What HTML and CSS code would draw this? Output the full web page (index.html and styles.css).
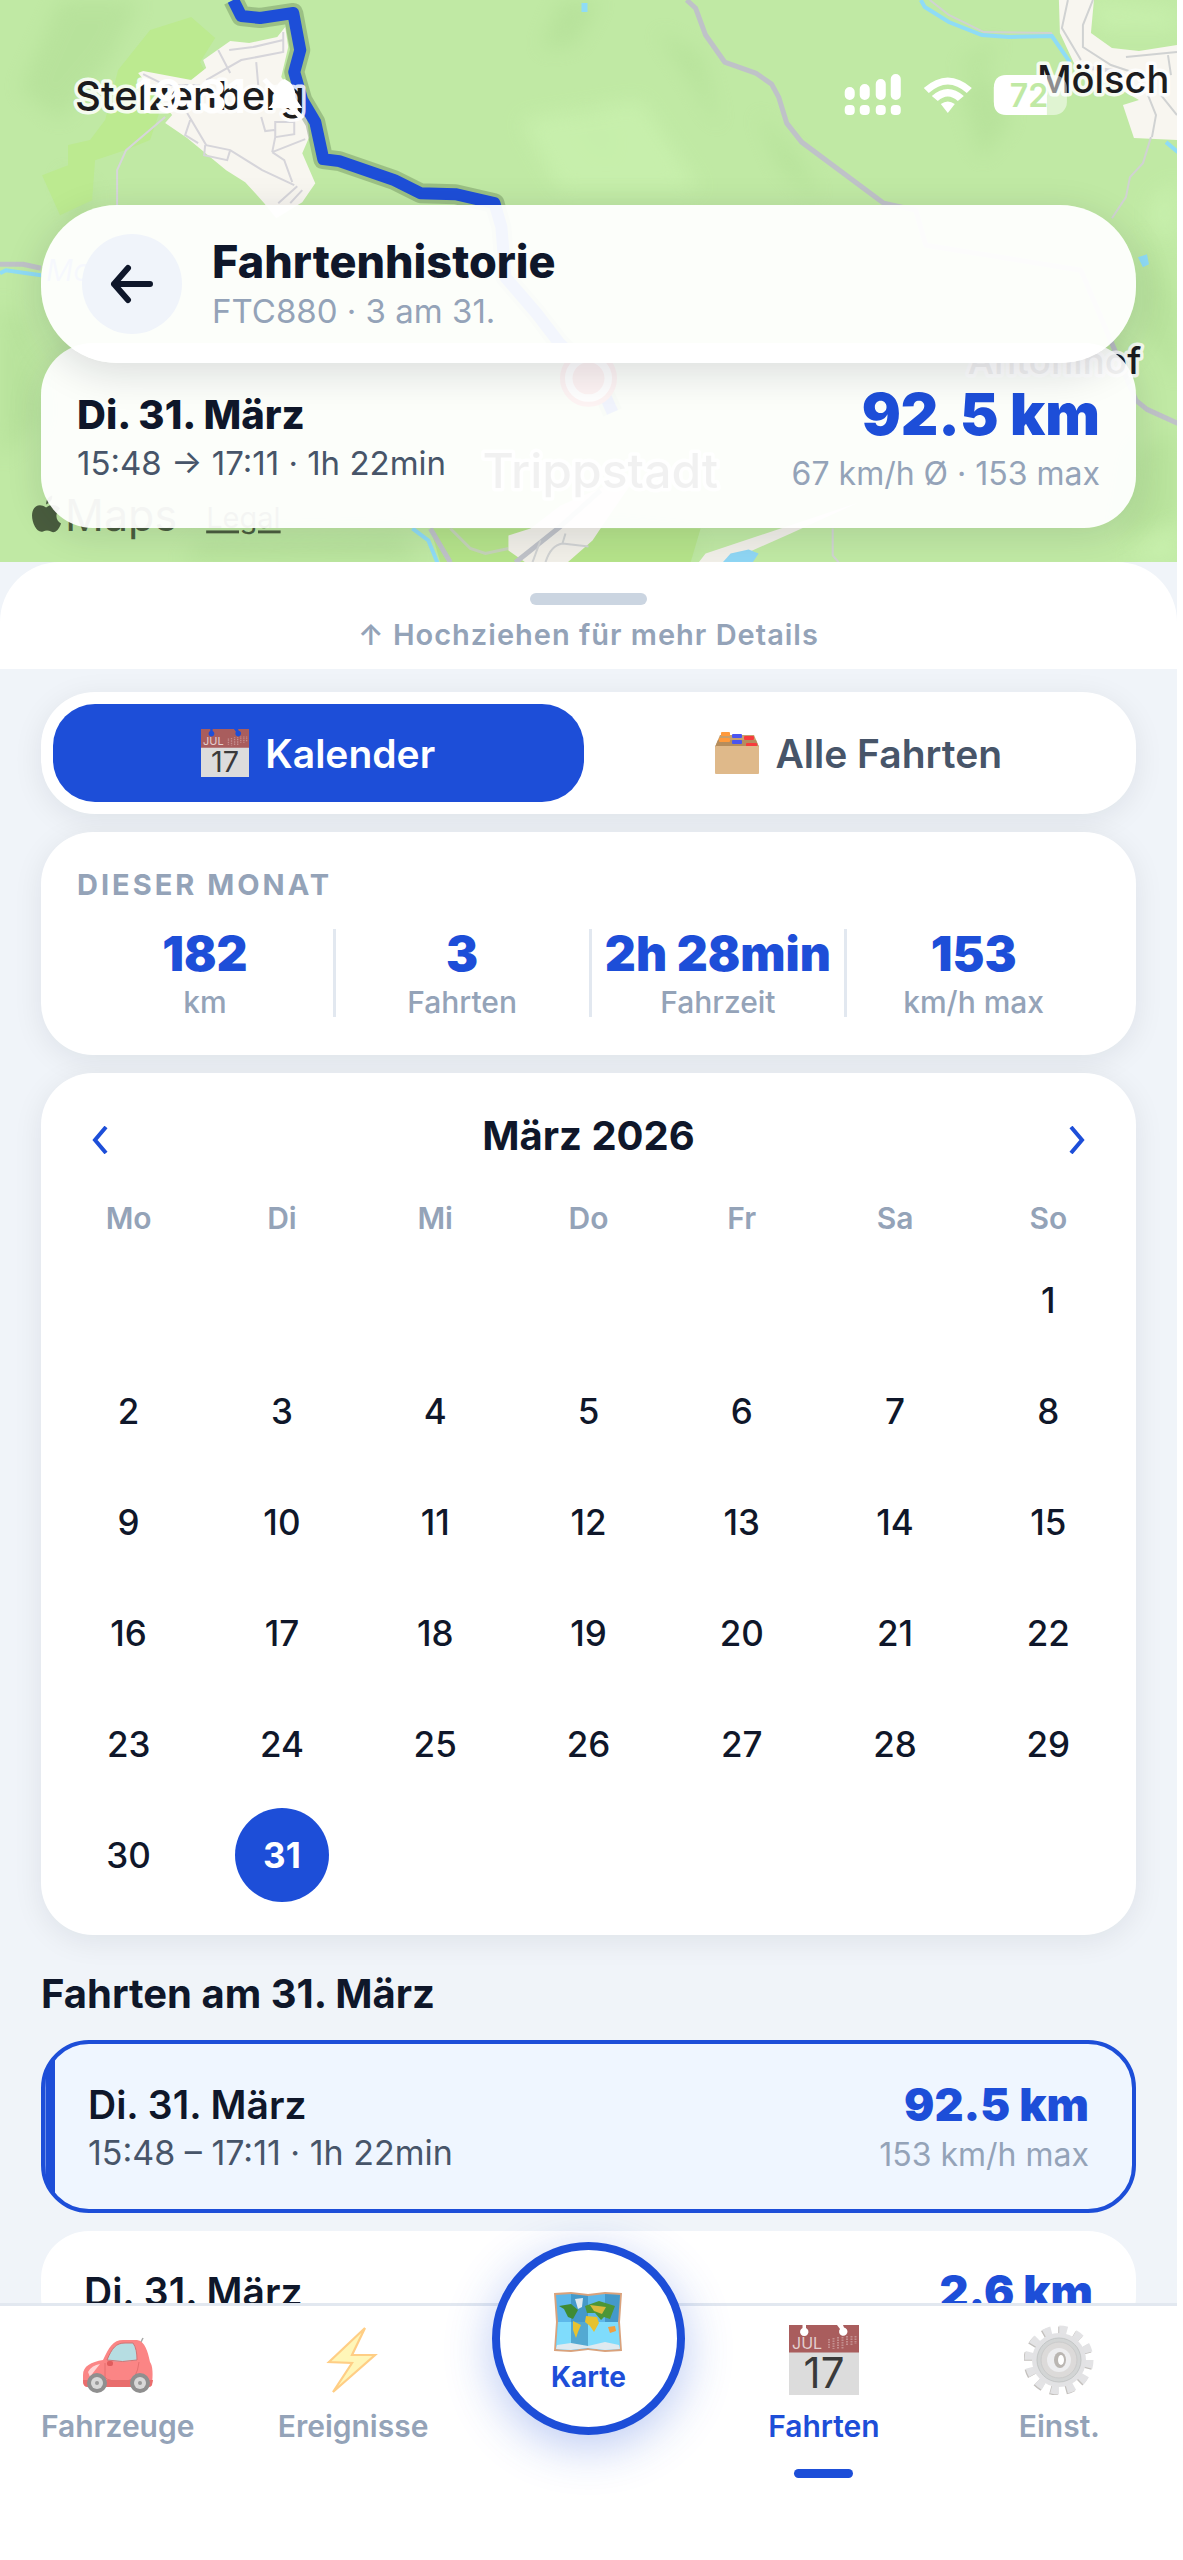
FILE: index.html
```html
<!DOCTYPE html>
<html lang="de">
<head>
<meta charset="utf-8">
<meta name="viewport" content="width=device-width, initial-scale=1">
<title>Fahrtenhistorie</title>
<link rel="stylesheet" href="styles.css">
</head>
<body>
<svg width="0" height="0" class="defs" aria-hidden="true">
  <defs>
    <symbol id="i-calendar" viewBox="0 0 70 70">
      <path fill="#dcdcdc" d="M0 26H70V70H0z"/>
      <path fill="#a95d5d" d="M0 0H13.500V3A4.200 4.200 0 1 0 17 3V0H48L51 4A4.200 4.200 0 1 0 55 2.500L54 0H70V27.500H0z"/>
      <text x="3" y="24" font-size="16" fill="#e3cfcf">JUL</text>
      <path stroke="#c48f8f" stroke-width="2" stroke-dasharray="1.500 1" d="M40 14V24M44.500 13V24M49 12V24M53.500 12V24M58 11V21M62.500 11V20M66.500 11V19"/>
      <text x="35" y="63" font-size="42" text-anchor="middle" fill="#3a3a3a">17</text>
    </symbol>
    <symbol id="i-box" viewBox="0 0 44 42">
      <path fill="#c79f6c" d="M5 3H39L44 15H0z"/>
      <path fill="#b58d5d" d="M3 8H41L44 15H0z"/>
      <rect x="6" y="0" width="9" height="4" rx="1" fill="#ff9a3c"/>
      <rect x="17" y="2" width="10" height="4" rx="1" fill="#4a55f0"/>
      <rect x="29" y="4" width="10" height="4" rx="1" fill="#f73c3c"/>
      <rect x="4" y="6" width="11" height="4" rx="1" fill="#ff9a3c"/>
      <rect x="17" y="8" width="10" height="4" rx="1" fill="#4a55f0"/>
      <rect x="31" y="11" width="11" height="4" rx="1" fill="#f73c3c"/>
      <rect y="14" width="44" height="28" rx="1" fill="#dfb98a"/>
    </symbol>
    <symbol id="i-car" viewBox="0 0 70 70">
      <path fill="none" stroke="#a9a9a9" stroke-width="1.500" d="M57 19L60 13"/>
      <path fill="#fb8585" d="M20 35C26 22 30 15 40 15H54C62 16 65 27 67 37C70 41 70 50 69 59Q69 62 65 62H5Q0 62 0 57V50C0 41 8 37 20 35z"/>
      <path fill="#e96d6d" d="M0 55H70L69 60Q68 62 65 62H5Q0 62 0 55z"/>
      <path fill="#b6dde2" stroke="#cf7474" stroke-width="1" d="M24 35C29 23 33 18 42 18H50C53 22 54 28 54 35Q40 38 24 35z"/>
      <path fill="none" stroke="#e56f6f" stroke-width="1" d="M22 38V52Q24 57 44 56Q54 55 56 37"/>
      <path fill="#ffd4d4" d="M5 47Q9 40 17 39Q12 45 7 52z"/>
      <rect x="24" y="36" width="6" height="5" rx="2" fill="#e05c5c"/>
      <circle cx="14" cy="58" r="10" fill="#8f8f8f"/><circle cx="14" cy="58" r="6" fill="#d8d8d8"/><circle cx="14" cy="58" r="2" fill="#999"/>
      <circle cx="57" cy="58" r="10" fill="#8f8f8f"/><circle cx="57" cy="58" r="6" fill="#d8d8d8"/><circle cx="57" cy="58" r="2" fill="#999"/>
    </symbol>
    <symbol id="i-bolt" viewBox="0 0 70 70">
      <path fill="#fff6b8" stroke="#ffce85" stroke-width="2.200" stroke-linejoin="miter" d="M47 3L11 37L34 38L15 67L57 30L34 30z"/>
    </symbol>
    <symbol id="i-map" viewBox="0 0 68 60">
      <path fill="#d9a27c" d="M0 1L17 0L34 2L51 0L68 1L66 30L68 59L51 60L34 58L17 60L0 59L2 30z"/>
      <path fill="#5db8ea" d="M2 3L17 2L34 4L51 2L66 3L64 30L66 57L51 58L34 56L17 58L2 57L4 30z"/>
      <path fill="#7fdcfc" d="M4 30H64L66 56L51 58L34 56L17 58L2 57z"/>
      <path fill="#2f7fae" opacity=".55" d="M17 2L34 4V56L17 58zM51 2L66 3L64 30H51z"/>
      <path fill="#dfeaf0" d="M21 7L29 6L28 15L24 17zM3 53L17 51L34 54L51 50L65 53L66 57L51 58L34 56L17 58L2 57z"/>
      <path fill="#3f8b32" d="M5 14L17 12L24 18L19 27L14 25L10 17z"/>
      <path fill="#e7c22f" d="M19 29L27 33L24 40L22 46L19 38zM32 24L43 25L45 31L40 40L36 34L31 30z"/>
      <path fill="#4c9637" d="M31 14L45 9L61 14L56 27L50 25L47 28L41 21L33 21z"/>
      <path fill="#d9b93c" d="M36 13L52 15L48 22L40 19z"/>
      <path fill="#f0a040" d="M54 35L61 34L62 39L56 41z"/>
    </symbol>
    <symbol id="i-gear" viewBox="0 0 70 70">
      <circle cx="34" cy="36" r="30" fill="none" stroke="#c3c0bd" stroke-width="9" stroke-dasharray="7.800 7.908"/>
      <circle cx="35" cy="35" r="30" fill="none" stroke="#e3e3e5" stroke-width="9" stroke-dasharray="7.800 7.908"/>
      <circle cx="35" cy="35" r="27" fill="#e2e2e4"/>
      <circle cx="35" cy="35" r="22" fill="#d3d5d5" stroke="#c3c6c6" stroke-width="1"/>
      <circle cx="35" cy="35" r="18" fill="#dcdad9" stroke="#cbcbcb" stroke-width="1"/>
      <circle cx="35" cy="35" r="12" fill="#ededef"/>
      <ellipse cx="36" cy="35" rx="6" ry="8" fill="#bab6b2"/>
      <ellipse cx="37" cy="35" rx="3" ry="5" fill="#fff"/>
    </symbol>
  </defs>
</svg>

<div class="app">
  <header class="top">
    <svg class="map" viewBox="0 0 1176 562" preserveAspectRatio="xMidYMin slice" role="img" aria-label="Karte der Fahrt">
      <defs><filter id="soft" x="-20%" y="-20%" width="140%" height="140%"><feGaussianBlur stdDeviation="10"/></filter></defs>
      <rect width="1176" height="562" fill="#c0e9a4"/>
      <g filter="url(#soft)" fill="#aeda92" opacity=".45">
        <path d="M60 0H140L110 60L60 120L20 90zM0 300L30 330L40 420L0 460z"/>
        <path d="M560 0H600L575 45L540 50zM580 110L610 135L608 160L583 130zM655 30L700 55L720 130L690 80zM755 110L800 160L820 200L780 170zM963 60L1000 40L985 65L960 75zM985 70L1010 120L980 160L960 90z"/>
        <path d="M60 170L95 190L80 240L70 210zM1140 230L1176 300V380L1140 330zM1135 450L1176 430V520L1120 540zM600 530L700 540L690 562H610zM200 540L400 535L420 562H180z"/>
      </g>
      <g filter="url(#soft)" fill="#c9f1ae" opacity=".8">
        <path d="M1150 200L1176 180V240L1150 230zM1130 555L1176 520V562H1130zM520 120L640 100L700 190L560 190zM1085 0L1176 10V30L1100 30z"/>
      </g>
      <path fill="#bcea90" d="M191 17L215 38L200 62L205 72L180 85L160 110L150 140L125 150L95 160L92 200L60 215L42 175L68 165V145L90 140L105 120L118 70L150 30z"/>
      <path fill="#b5e38a" d="M430 528H700L690 562H440z"/>
      <path fill="#f8f6f0" d="M285 27L277 37L249 43L230 41L203 60L206 68L191 80L143 71L138 73L172 115L165 123L187 138L226 170L245 182L264 203L276 218L302 202L315 183L302 153L309 137L306 113L281 77L288 47z"/>
      <g fill="none" stroke="#d6d5da" stroke-width="2">
        <path d="M283 32V52L241 60L206 80M229 50L253 47L283 40M256 62L258 85M218 50L230 73M143 74L165 85H200M187 113L206 145L230 150L262 170L294 185M190 120L185 135L198 143M205 145L204 155L227 160L230 150M261 117L265 131L274 130M275 122H294V134L275 137zM272 152L275 137M272 152L284 160L292 182M272 152L305 139M278 203L297 186M290 203L302 190"/>
        <path d="M165 117L126 150L117 170V205"/>
      </g>
      <path fill="#f8f6f0" d="M1058 0L1059 33L1073 63L1138 100L1122 105L1133 138L1176 140V45L1138 51L1111 48L1090 33L1093 0z"/>
      <g fill="none" stroke="#d0d2d2" stroke-width="2">
        <path d="M1067 0L1061 28L1080 60M1092 0L1082 25V47L1110 65L1140 75M1125 57L1176 52M1167 55L1170 75M1147 95L1155 115L1151 137M1160 95L1176 115"/>
        <path d="M929 0L948 15L983 32L1050 33L1064 55M1150 137L1142 163L1129 177L1125 197L1111 218M832 528V555L838 562"/>
      </g>
      <g fill="none" stroke="#bfc2c8" stroke-width="5" stroke-linejoin="round">
        <path d="M686 0L695 8L705 35L724 62L755 73L771 84L778 97L786 123L801 142L883 203L915 210L925 245L1080 270L1135 400L1146 409L1177 423M0 264H23L41 268"/>
      </g>
      <g fill="none" stroke="#8fdcf6" stroke-width="4">
        <path d="M920 0L924 7L948 22L981 35L1008 37L1051 36L1069 62M1165 142L1177 152M0 273L6 270L41 275M412 528L428 540L437 562"/>
      </g>
      <path stroke="#d6d5da" stroke-width="4" fill="none" d="M1075 66L1120 72"/>
      <path fill="#8fdcf6" d="M1137 257L1146 254L1148 264L1142 267zM581 3H587V12H581z"/>
      <path fill="none" stroke="#bfc2c8" stroke-width="5" d="M430 528L440 545L450 562"/>
      <path fill="none" stroke="#c5d3b8" stroke-width="3" d="M450 528L470 548L485 553L508 548"/>
      <path fill="#f1efe8" d="M508 535L530 528L560 505L640 470L600 528L592 540L567 562H525L508 550zM698 562L705 553L780 528L858 502L790 533L725 562z"/>
      <path fill="none" stroke="#bfc2c8" stroke-width="5" d="M515 562L560 526L600 490"/>
      <path fill="none" stroke="#d0d2d2" stroke-width="2" d="M532 562L540 540M545 562Q550 545 562 543L565 533M562 543L588 546"/>
      <path fill="#8fd6f4" d="M722 562L730 553L748 549L758 553L752 562z"/>
      <path class="map-route-halo" d="M233 0L241 16L260 18L293 13L300 50L294 72L302 100L315 122L323 159L339 161L394 180L420 193L455 194L494 203L501 227L505 277L536 313L559 343L600 385L612 412"/>
      <path class="map-route" d="M233 0L241 16L260 18L293 13L300 50L294 72L302 100L315 122L323 159L339 161L394 180L420 193L455 194L494 203L501 227L505 277L536 313L559 343L600 385L612 412"/>
      <circle cx="588" cy="378" r="26" fill="#fff" stroke="#ef4444" stroke-width="5"/><circle cx="588" cy="378" r="16" fill="#ef4444"/>
      <g class="map-label">
        <text x="75" y="110" font-size="40">Stelzenberg</text>
        <text x="1036" y="93" font-size="38">Mölsch</text>
        <text x="967" y="374" font-size="37">Antonihof</text>
        <text x="482" y="488" font-size="48">Trippstadt</text>
      </g>
      <text x="46" y="281" font-size="30" font-style="italic" fill="#5a7fd0">Mo</text>
      <path class="map-credit" d="M46 507C51 503 57 504 60 508C55 512 55 520 61 523C58 531 54 533 51 531Q47 529 43 531C37 533 32 523 32 515C32 506 39 502 46 507zM46 504Q46 497 52 495Q53 501 46 504z"/>
      <text class="map-credit" x="65" y="531" font-size="43">Maps</text>
      <text class="map-credit" x="206" y="528" font-size="29" text-decoration="underline">Legal</text>
      <g class="status" fill="#fff">
        <text x="134" y="113" font-size="46">19:31</text>
        <path d="M268 108Q275 102 275 90Q277 82 284 79Q296 84 295 98L302 108zM266 78L304 117L300 120L262 81z"/>
        <path d="M844 92a4 4 0 0 1 10 0V95a4 4 0 0 1-10 0zM859 89a4 4 0 0 1 10 0V95a4 4 0 0 1-10 0zM875 84a4 4 0 0 1 10 0V95a4 4 0 0 1-10 0zM890 79a4 4 0 0 1 10 0V95a4 4 0 0 1-10 0z"/>
        <rect x="844" y="105" width="10" height="10" rx="4"/><rect x="859" y="105" width="10" height="10" rx="4"/><rect x="875" y="105" width="10" height="10" rx="4"/><rect x="890" y="105" width="10" height="10" rx="4"/>
        <path d="M923 88Q947 67 971 88L966 93Q947 76 928 93zM931 96Q947 82 963 96L957 101Q947 92 937 101zM940 104Q947 99 954 104L947 113z"/>
        <rect x="993" y="75" width="73" height="40" rx="13" opacity=".5"/>
        <path d="M1006 75H1046V115H1006Q993 115 993 102V88Q993 75 1006 75z"/>
        <text x="1009" y="107" font-size="32" fill="#c0e9a4">72</text>
      </g>
    </svg>

    <div class="title-card">
      <button class="back" type="button" aria-label="Zurück">
        <svg width="44" height="40" viewBox="0 0 44 40" fill="none" stroke="#0f172a" stroke-width="6" stroke-linecap="round" stroke-linejoin="round"><path d="M40 20H4M18 4L4 20L18 36"/></svg>
      </button>
      <div>
        <h1 class="title">Fahrtenhistorie</h1>
        <p class="subtitle">FTC880 · 3 am 31.</p>
      </div>
    </div>

    <section class="trip-summary">
      <div>
        <p class="summary-date">Di. 31. März</p>
        <p class="summary-time">15:48 → 17:11 · 1h 22min</p>
      </div>
      <div class="right">
        <p class="summary-distance">92.5 km</p>
        <p class="summary-speed">67 km/h Ø · 153 max</p>
      </div>
    </section>
  </header>

  <div class="handle">
    <span class="grabber"></span>
    <p class="hint">↑ Hochziehen für mehr Details</p>
  </div>

  <main class="content">
    <div class="tabs" role="tablist">
      <button class="tab tab-active" type="button" role="tab" aria-selected="true"><svg width="48" height="48" aria-hidden="true"><use href="#i-calendar"/></svg>Kalender</button>
      <button class="tab" type="button" role="tab" aria-selected="false"><svg width="44" height="42" aria-hidden="true"><use href="#i-box"/></svg>Alle Fahrten</button>
    </div>

    <section class="card stats">
      <h2 class="stats-title">DIESER MONAT</h2>
      <div class="stats-row">
        <div class="stat"><span class="stat-value">182</span><span class="stat-label">km</span></div>
        <div class="stat"><span class="stat-value">3</span><span class="stat-label">Fahrten</span></div>
        <div class="stat"><span class="stat-value">2h 28min</span><span class="stat-label">Fahrzeit</span></div>
        <div class="stat"><span class="stat-value">153</span><span class="stat-label">km/h max</span></div>
      </div>
    </section>

    <section class="card calendar">
      <div class="month">
        <button class="month-nav" type="button" aria-label="Voriger Monat"><svg width="16" height="28" viewBox="0 0 16 28" fill="none" stroke="#1d4ed8" stroke-width="4"><path d="M14 1L3 14L14 27"/></svg></button>
        <h2 class="month-name">März 2026</h2>
        <button class="month-nav" type="button" aria-label="Nächster Monat"><svg width="16" height="28" viewBox="0 0 16 28" fill="none" stroke="#1d4ed8" stroke-width="4"><path d="M2 1L13 14L2 27"/></svg></button>
      </div>
      <table class="days">
        <thead><tr><th>Mo</th><th>Di</th><th>Mi</th><th>Do</th><th>Fr</th><th>Sa</th><th>So</th></tr></thead>
        <tbody>
          <tr><td></td><td></td><td></td><td></td><td></td><td></td><td>1</td></tr>
          <tr><td>2</td><td>3</td><td>4</td><td>5</td><td>6</td><td>7</td><td>8</td></tr>
          <tr><td>9</td><td>10</td><td>11</td><td>12</td><td>13</td><td>14</td><td>15</td></tr>
          <tr><td>16</td><td>17</td><td>18</td><td>19</td><td>20</td><td>21</td><td>22</td></tr>
          <tr><td>23</td><td>24</td><td>25</td><td>26</td><td>27</td><td>28</td><td>29</td></tr>
          <tr><td>30</td><td><button class="day-selected" type="button" aria-pressed="true">31</button></td><td></td><td></td><td></td><td></td><td></td></tr>
        </tbody>
      </table>
    </section>

    <h2 class="list-title">Fahrten am 31. März</h2>

    <article class="trip trip-active">
      <div>
        <p class="trip-date">Di. 31. März</p>
        <p class="trip-time">15:48 – 17:11 · 1h 22min</p>
      </div>
      <div class="right">
        <p class="trip-distance">92.5 km</p>
        <p class="trip-speed">153 km/h max</p>
      </div>
    </article>
    <article class="trip">
      <p class="trip-date">Di. 31. März</p>
      <p class="trip-distance">2.6 km</p>
    </article>
  </main>

  <nav class="nav">
    <a class="nav-item" href="#fahrzeuge"><svg width="70" height="70" aria-hidden="true"><use href="#i-car"/></svg>Fahrzeuge</a>
    <a class="nav-item" href="#ereignisse"><svg width="70" height="70" aria-hidden="true"><use href="#i-bolt"/></svg>Ereignisse</a>
    <a class="nav-map" href="#karte"><svg width="68" height="60" aria-hidden="true"><use href="#i-map"/></svg>Karte</a>
    <a class="nav-item nav-current" href="#fahrten" aria-current="page"><svg width="70" height="70" aria-hidden="true"><use href="#i-calendar"/></svg>Fahrten</a>
    <a class="nav-item" href="#einstellungen"><svg width="70" height="70" aria-hidden="true"><use href="#i-gear"/></svg>Einst.</a>
  </nav>
</div>
</body>
</html>
```

FILE: styles.css
```css
:root {
  --blue: #1d4ed8;
  --ink: #0f172a;
  --slate: #475569;
  --muted: #94a3b8;
  --page: #f0f4f9;
  --shadow: 0 6px 30px rgba(15, 23, 42, .08);
}

* { box-sizing: border-box; }

body {
  margin: 0;
  background: #fff;
  color: var(--ink);
  font-family: Inter, "Liberation Sans", sans-serif;
}

h1, h2, p { margin: 0; }

button {
  padding: 0;
  border: 0;
  background: none;
  color: inherit;
  font: inherit;
}

.defs { position: absolute; }

.app {
  display: flex;
  flex-direction: column;
  height: 100vh;
  margin-right: 6px;
  background: var(--page);
  overflow: hidden;
}

/* map and floating cards */
.top {
  position: relative;
  flex: none;
  padding: 205px 41px 34px;
  overflow: hidden;
}

.map {
  position: absolute;
  inset: 0;
  width: 100%;
  height: 100%;
}

.map-route, .map-route-halo { fill: none; stroke: var(--blue); stroke-width: 12; stroke-linejoin: round; }
.map-route-halo { stroke: #56754a; stroke-width: 20; opacity: .35; }
.map-label { fill: #1c1c1e; stroke: #fff; stroke-opacity: .85; stroke-width: 7; stroke-linejoin: round; paint-order: stroke; font-weight: 500; }
.map-credit { fill: #4a5d3e; }
.status { font-weight: 600; }

.title-card {
  position: relative;
  z-index: 2;
  display: flex;
  align-items: center;
  gap: 30px;
  padding: 29px 41px;
  border-radius: 76px;
  background: rgba(255, 255, 255, .95);
  box-shadow: 0 10px 40px rgba(15, 23, 42, .14);
}

.back {
  display: grid;
  place-items: center;
  width: 100px;
  height: 100px;
  border-radius: 50%;
  background: #f0f4fa;
}

.title { font-size: 45px; line-height: 54px; font-weight: 800; }
.subtitle { font-size: 33px; line-height: 44px; color: var(--muted); }

.trip-summary {
  position: relative;
  z-index: 1;
  display: flex;
  align-items: center;
  justify-content: space-between;
  margin-top: -20px;
  padding: 36px 36px 29px;
  border-radius: 52px;
  background: rgba(255, 255, 255, .94);
  box-shadow: 0 6px 36px rgba(15, 23, 42, .12);
}

.right { text-align: right; }
.summary-date { font-size: 40px; line-height: 48px; font-weight: 800; }
.summary-time { font-size: 33px; line-height: 48px; color: var(--slate); }
.summary-distance { font-size: 58px; line-height: 70px; font-weight: 900; color: var(--blue); }
.summary-speed { font-size: 32px; line-height: 50px; color: var(--muted); }

/* sheet handle */
.handle {
  display: flex;
  flex: none;
  flex-direction: column;
  align-items: center;
  gap: 10px;
  padding: 31px 0 14px;
  border-radius: 60px 60px 0 0;
  background: #fff;
}

.grabber { width: 117px; height: 12px; border-radius: 6px; background: #cbd5e1; }
.hint { font-size: 29px; line-height: 40px; font-weight: 600; letter-spacing: 1px; color: var(--muted); }

/* scroll area */
.content {
  display: flex;
  flex: 1;
  flex-direction: column;
  gap: 18px;
  min-height: 0;
  padding: 23px 41px 0;
  overflow: hidden;
}

.content > * { flex: none; }

.tabs {
  display: flex;
  gap: 10px;
  padding: 12px;
  border-radius: 54px;
  background: #fff;
  box-shadow: var(--shadow);
}

.tab {
  display: flex;
  flex: 1;
  align-items: center;
  justify-content: center;
  gap: 16px;
  height: 98px;
  border-radius: 42px;
  font-size: 39px;
  font-weight: 600;
  color: var(--slate);
}

.tab-active { background: var(--blue); color: #fff; }

.card { border-radius: 52px; background: #fff; box-shadow: var(--shadow); }

.stats { padding: 32px 36px 38px; }
.stats-title { margin-bottom: 23px; font-size: 29px; line-height: 42px; font-weight: 700; letter-spacing: 3px; color: var(--muted); }
.stats-row { display: grid; grid-template-columns: repeat(4, minmax(0, 1fr)); }
.stat { display: flex; flex-direction: column; align-items: center; gap: 10px; white-space: nowrap; }
.stat + .stat { border-left: 3px solid #e2e8f0; }
.stat-value { font-size: 48px; line-height: 49px; font-weight: 900; color: var(--blue); }
.stat-label { font-size: 30px; line-height: 29px; font-weight: 500; color: var(--muted); }

.calendar { padding: 28px 11px 25px; }
.month { display: flex; align-items: center; justify-content: space-between; margin: 0 13px 27px; }
.month-nav { display: grid; place-items: center; width: 70px; height: 70px; padding-top: 8px; }
.month-name { font-size: 40px; line-height: 48px; font-weight: 700; }

.days { width: 100%; border-collapse: collapse; table-layout: fixed; text-align: center; }
.days th { height: 46px; padding: 0 0 6px; font-size: 30px; line-height: 40px; font-weight: 600; color: var(--muted); }
.days td { height: 111px; padding: 0; font-size: 35px; line-height: 40px; font-weight: 500; }
.day-selected { display: block; width: 94px; height: 94px; margin: 0 auto; border-radius: 50%; background: var(--blue); color: #fff; font-weight: 700; }

.list-title { margin: 21px 0 8px; font-size: 40px; line-height: 40px; font-weight: 700; }

.trip {
  display: flex;
  justify-content: space-between;
  padding: 37px 43px 28px;
  border-radius: 48px;
  background: #fff;
}

.trip-active {
  border: 4px solid var(--blue);
  background: linear-gradient(90deg, #6b8ee8 1px, var(--blue) 1px 10px, #eff6ff 10px);
}

.trip-date { font-size: 39px; line-height: 48px; font-weight: 600; }
.trip-time { font-size: 34px; line-height: 48px; color: var(--slate); }
.trip-distance { font-size: 45px; line-height: 48px; font-weight: 900; color: var(--blue); }
.trip-speed { font-size: 32px; line-height: 52px; color: var(--muted); }

/* bottom navigation */
.nav {
  position: relative;
  z-index: 3;
  display: grid;
  flex: none;
  grid-template-columns: repeat(5, 1fr);
  justify-items: center;
  align-items: start;
  padding-bottom: 82px;
  border-top: 3px solid #e2e8f0;
  background: #fff;
}

.nav-item {
  display: flex;
  flex-direction: column;
  align-items: center;
  gap: 11px;
  padding-top: 19px;
  font-size: 30px;
  line-height: 40px;
  font-weight: 600;
  color: var(--muted);
  text-decoration: none;
}

.nav-item svg { font-weight: 400; }
.nav-item::after { content: ""; width: 59px; height: 9px; margin-top: 12px; border-radius: 5px; }
.nav-current { color: var(--blue); }
.nav-current::after { background: var(--blue); }

.tab svg { font-weight: 400; }

.nav-map {
  display: flex;
  flex-direction: column;
  align-items: center;
  gap: 9px;
  width: 193px;
  height: 193px;
  margin-top: -64px;
  padding-top: 42px;
  border: 8px solid var(--blue);
  border-radius: 50%;
  background: #fff;
  box-shadow: 0 12px 48px rgba(29, 78, 216, .3);
  color: var(--blue);
  font-size: 28px;
  line-height: 32px;
  font-weight: 700;
  text-decoration: none;
}
```
